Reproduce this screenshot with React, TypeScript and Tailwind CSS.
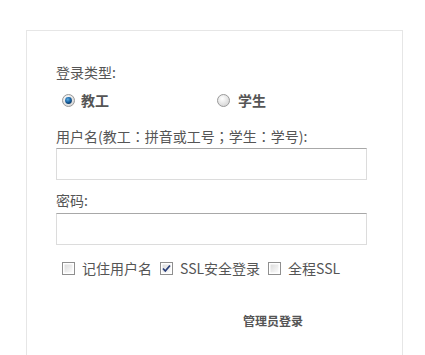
import React from "react";

const Radio = ({ checked }: { checked: boolean }) => (
  <svg width="13" height="13" viewBox="0 0 13 13" className="shrink-0">
    <defs>
      <radialGradient id={checked ? "rgc" : "rgu"} cx="0.4" cy="0.35" r="0.7">
        <stop offset="0" stopColor="#ffffff" />
        <stop offset="1" stopColor="#d4d4d4" />
      </radialGradient>
      <radialGradient id="blue" cx="0.4" cy="0.35" r="0.7">
        <stop offset="0" stopColor="#5fb0e6" />
        <stop offset="0.6" stopColor="#155f9f" />
        <stop offset="1" stopColor="#0a355f" />
      </radialGradient>
    </defs>
    <circle cx="6.5" cy="6.5" r="6" fill={`url(#${checked ? "rgc" : "rgu"})`} stroke="#9a9a9a" strokeWidth="1" />
    {checked && <circle cx="6.5" cy="6.5" r="3.4" fill="url(#blue)" />}
  </svg>
);

const Check = ({ checked }: { checked: boolean }) => (
  <svg width="13" height="13" viewBox="0 0 13 13" className="shrink-0">
    <defs>
      <linearGradient id="cbg" x1="0" y1="0" x2="1" y2="1">
        <stop offset="0" stopColor="#dcdcdc" />
        <stop offset="1" stopColor="#fbfbfb" />
      </linearGradient>
    </defs>
    <rect x="0.5" y="0.5" width="12" height="12" fill="#fff" stroke="#8f8f8f" />
    <rect x="2.5" y="2.5" width="8" height="8" fill="url(#cbg)" />
    {checked && (
      <path d="M3 6.5 L5.3 9 L10 3.5" fill="none" stroke="#2a3f7a" strokeWidth="1.8" />
    )}
  </svg>
);

const P = ({ c }: { c: string }) => (
  <span style={{ fontFamily: '"Noto Sans CJK TC", sans-serif' }}>{c}</span>
);

export default function App() {
  const font = { fontFamily: '"Noto Sans CJK SC", "Noto Sans", sans-serif' };
  return (
    <div className="min-h-screen bg-white" style={font}>
      <div className="ml-[26px] pt-[30px]">
        <div className="w-[377px] h-[325px] border border-b-0 border-[#e6e6e6] pl-[29px] pt-[31px] text-[#555] text-[14px]">
          <div className="leading-[20px] h-[20px]">登录类型:</div>
          <div className="mt-[8px] grid grid-cols-2 w-[310px] h-[20px]">
            <div className="flex items-center pl-[6px]">
              <Radio checked={true} />
              <span className="ml-[6px] font-bold leading-[20px]">教工</span>
            </div>
            <div className="flex items-center pl-[6px]">
              <Radio checked={false} />
              <span className="ml-[8px] font-bold leading-[20px]">学生</span>
            </div>
          </div>
          <div className="mt-[16px] leading-[20px] h-[20px]">
            用户名(教工<P c="：" />拼音或工号<P c="；" />学生<P c="：" />学号):
          </div>
          <div className="mt-[2px] w-[311px] h-[32px] border border-[#dcdcdc] border-t-[#a8a8a8] bg-white" />
          <div className="mt-[10px] leading-[20px] h-[20px]">密码:</div>
          <div className="mt-[3px] w-[311px] h-[32px] border border-[#dcdcdc] border-t-[#a8a8a8] bg-white" />
          <div className="mt-[13px] flex items-center h-[20px] leading-[20px]">
            <span className="ml-[6px]"><Check checked={false} /></span>
            <span className="ml-[7px]">记住用户名</span>
            <span className="ml-[8px]"><Check checked={true} /></span>
            <span className="ml-[7px]">SSL安全登录</span>
            <span className="ml-[8px]"><Check checked={false} /></span>
            <span className="ml-[7px]">全程SSL</span>
          </div>
          <div className="mt-[33px] ml-[187px] text-[12px] font-bold leading-[20px]">管理员登录</div>
        </div>
      </div>
    </div>
  );
}
